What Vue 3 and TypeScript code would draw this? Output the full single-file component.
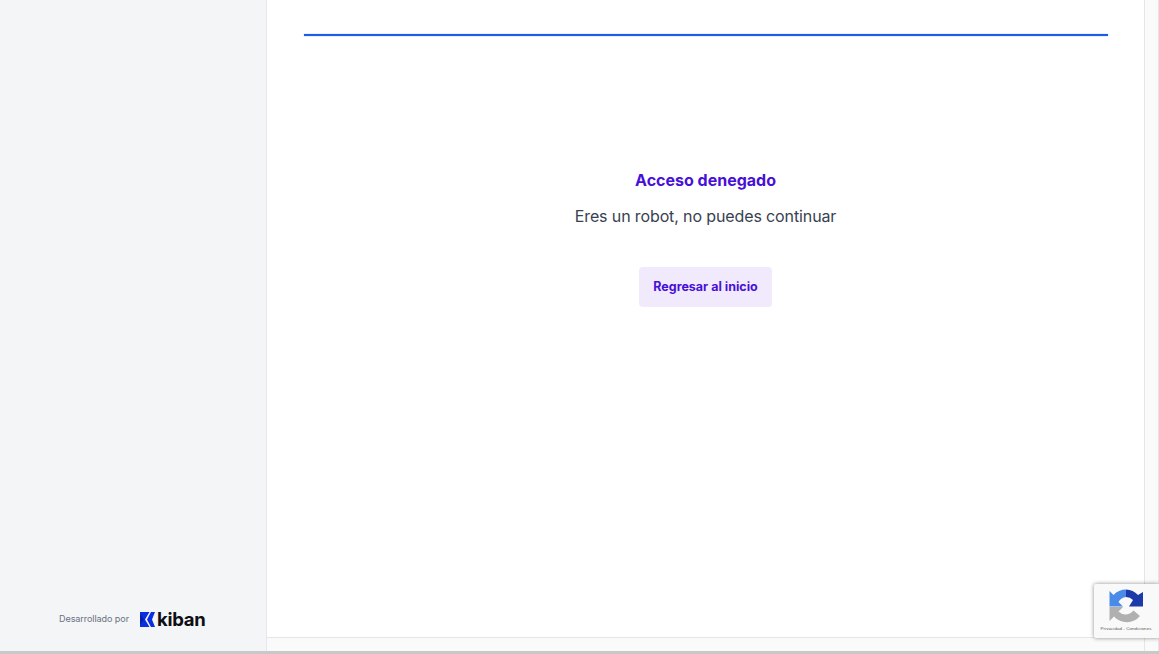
<template>
  <div class="page">
    <div class="layout">
      <aside class="sidebar">
        <div class="powered">
          <span class="powered__label">Desarrollado por</span>
          <span class="logo">
            <svg class="logo__mark" width="15" height="15" viewBox="0 0 15 15">
              <path d="M0 0h9.500L5 7.500l4.500 7.500H0z" fill="#0a2fe0" />
              <path d="M0 2l4 5.500L0 13z" fill="#0620a8" />
              <path d="M11 0h4l-3 7.500 3 7.500h-4L7 7.500z" fill="#0a2fe0" />
            </svg>
            <span class="logo__text">kiban</span>
          </span>
        </div>
      </aside>

      <div class="content">
        <main class="main">
          <div class="progress"></div>
          <section class="message">
            <h1 class="message__title">{{ title }}</h1>
            <p class="message__text">{{ text }}</p>
            <button class="message__btn" type="button">{{ action }}</button>
          </section>
        </main>
        <div class="scroll-x"></div>
      </div>

      <div class="scroll-y"></div>
    </div>
    <div class="bottom-edge"></div>

    <div class="recaptcha">
      <svg class="recaptcha__icon" width="34" height="35" viewBox="0 0 34 35">
        <path d="M17 .5A17 17 0 0 0 4.500 6L.5 2v15.500H14L9.500 13A10 10 0 0 1 17 8z" fill="#4a8ae8" />
        <path d="M17 .5V8a10 10 0 0 1 7 3l-4 6.500h14V3l-5 3A17 17 0 0 0 17 .5z" fill="#1c3aa9" />
        <path d="M.5 18v14L5 27.500A17 17 0 0 0 31 27l-6.500-5.500A10 10 0 0 1 9.500 22.500L14 18z" fill="#b0b0b0" />
      </svg>
      <div class="recaptcha__links">Privacidad - Condiciones</div>
    </div>
  </div>
</template>

<script setup lang="ts">
const title = 'Acceso denegado'
const text = 'Eres un robot, no puedes continuar'
const action = 'Regresar al inicio'
</script>

<style>
html,
body {
  margin: 0;
  overflow: hidden;
}
</style>

<style scoped>
.page {
  display: flex;
  flex-direction: column;
  width: 1159px;
  height: 654px;
  overflow: hidden;
  background: #fff;
  font-family: Inter, "Liberation Sans", sans-serif;
}

.layout {
  display: flex;
  flex: 1;
  min-height: 0;
}

.sidebar {
  display: flex;
  flex-direction: column;
  justify-content: flex-end;
  width: 266px;
  background: #f4f5f7;
  border-right: 1px solid #e5e7eb;
}

.powered {
  display: flex;
  align-items: center;
  gap: 11px;
  padding: 0 0 24px 59px;
}

.powered__label {
  width: 70px;
  font-size: 9.1px;
  line-height: 16px;
  letter-spacing: -0.1px;
  white-space: nowrap;
  color: #6b7280;
}

.logo {
  display: flex;
  align-items: center;
  gap: 2px;
}

.logo__text {
  font-size: 18.500px;
  line-height: 16px;
  font-weight: 700;
  letter-spacing: -0.3px;
  color: #0d0f14;
}

.content {
  display: flex;
  flex: 1;
  flex-direction: column;
  min-width: 0;
}

.main {
  flex: 1;
  padding: 34px 36px 0;
}

.progress {
  height: 2px;
  margin-left: 1px;
  background: #1d5be8;
  box-shadow: 0 0 1px #1d5be8;
}

.message {
  display: flex;
  flex-direction: column;
  align-items: center;
  padding-top: 134px;
}

.message__title {
  margin: 0;
  font-size: 16px;
  line-height: 20px;
  font-weight: 700;
  color: #4710d9;
}

.message__text {
  margin: 16px 0 0;
  font-size: 16px;
  line-height: 20px;
  letter-spacing: -0.12px;
  color: #374151;
}

.message__btn {
  width: 133px;
  height: 40px;
  margin-top: 41px;
  padding: 0 0 2px;
  border: 0;
  border-radius: 4px;
  background: #f1eafc;
  font-family: inherit;
  font-size: 12.5px;
  font-weight: 700;
  color: #4710d9;
  cursor: pointer;
}

.scroll-x {
  height: 13px;
  background: #fafafa;
  border-top: 1px solid #e5e5e5;
}

.scroll-y {
  width: 13px;
  background: #fafafa;
  border-left: 1px solid #e5e5e5;
  border-right: 1px solid #e5e5e5;
}

.bottom-edge {
  height: 3px;
  background: #c8c8c8;
}

.recaptcha {
  position: absolute;
  top: 584px;
  left: 1094px;
  display: flex;
  flex-direction: column;
  align-items: center;
  width: 65px;
  height: 54px;
  padding-top: 5px;
  box-sizing: border-box;
  background: #f9f9f9;
  box-shadow: 0 0 4px rgba(0, 0, 0, 0.45);
  border-radius: 2px 0 0 2px;
}

.recaptcha__icon {
  margin-left: -2px;
}

.recaptcha__links {
  margin-top: 2px;
  margin-left: -1px;
  font-family: "Liberation Sans", sans-serif;
  font-size: 4.4px;
  line-height: 6px;
  letter-spacing: 0.1px;
  white-space: nowrap;
  color: #555;
}
</style>
